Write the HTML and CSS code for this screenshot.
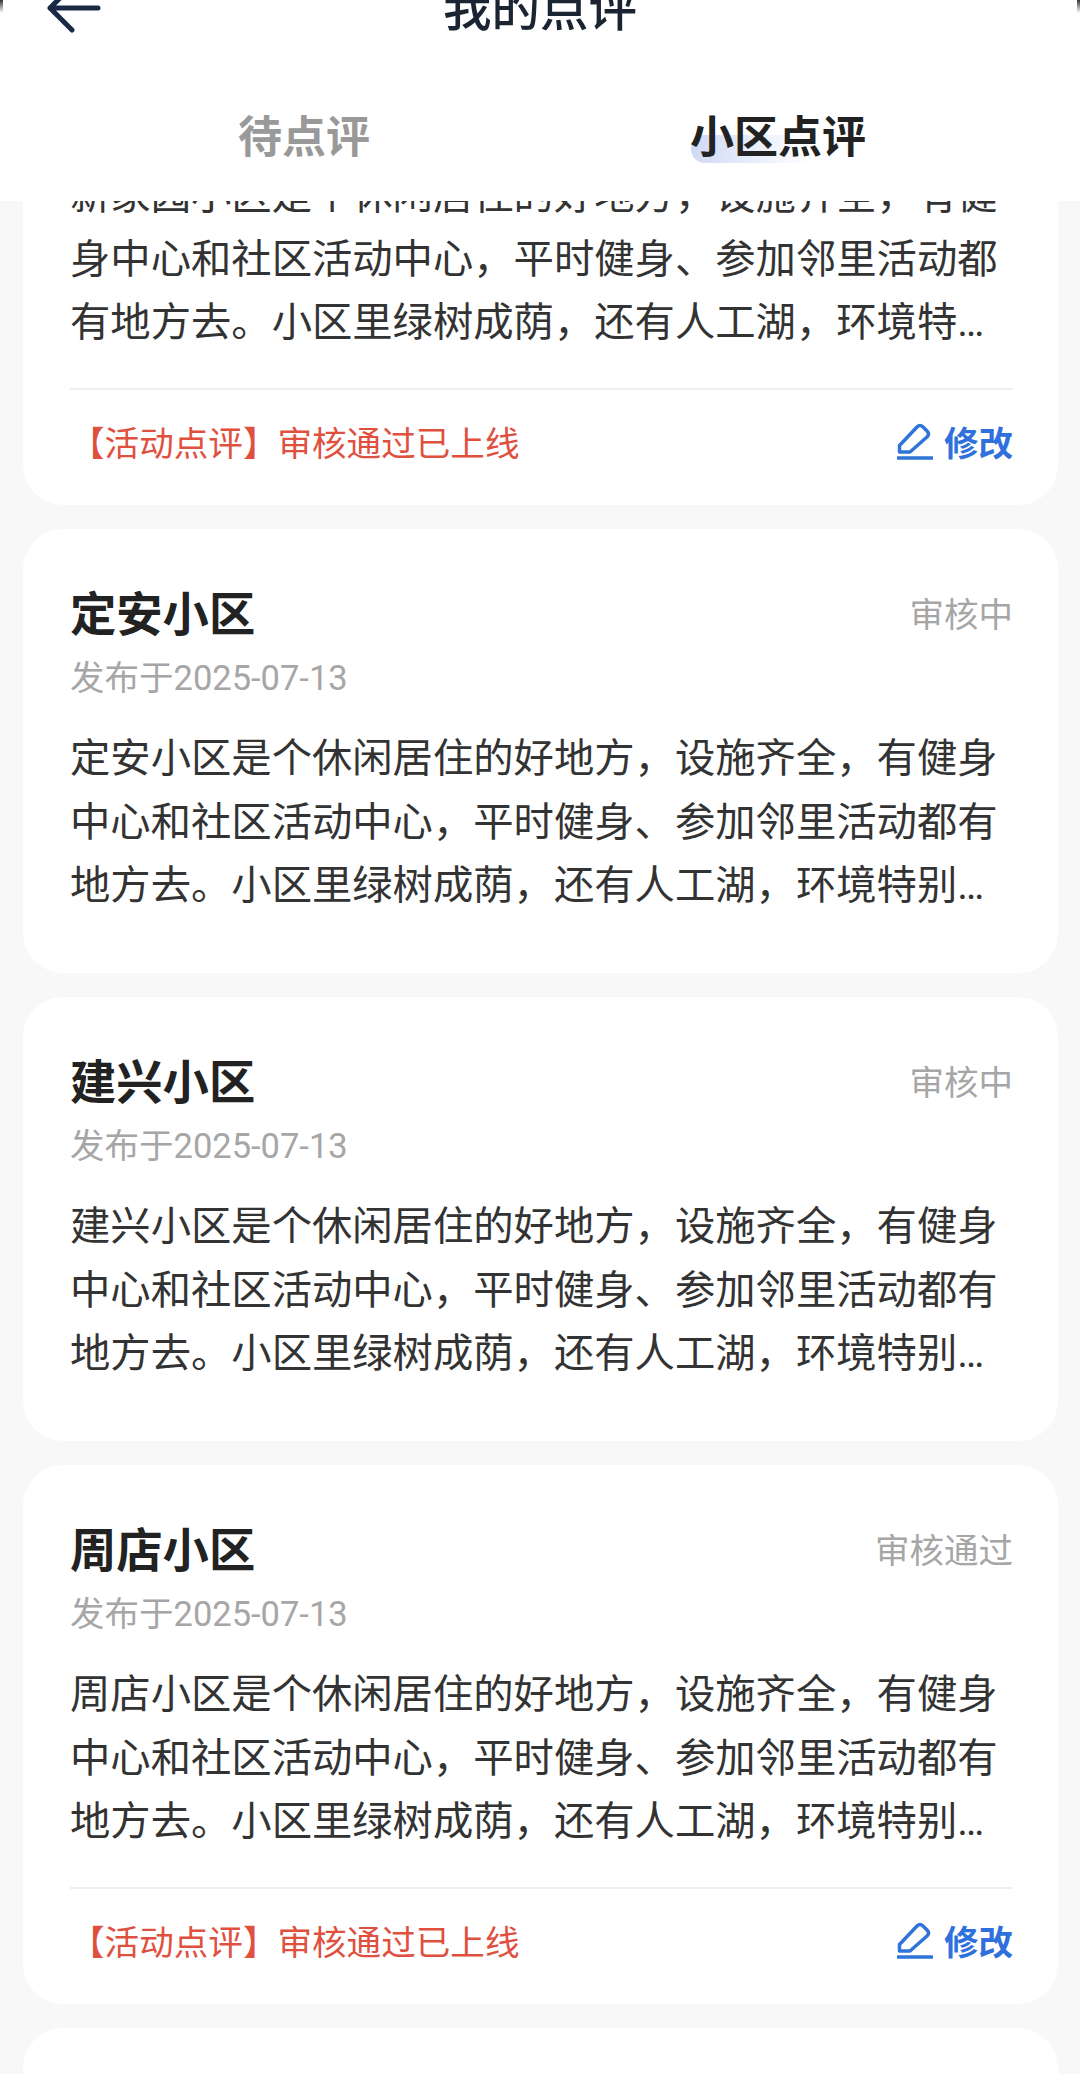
FILE: index.html
```html
<!DOCTYPE html>
<html lang="zh-CN">
<head>
<meta charset="utf-8">
<title>我的点评</title>
<link rel="stylesheet" href="styles.css">
</head>
<body>
<div class="page">
  <header class="header">
    <div class="nav">
      <svg class="nav-back" viewBox="0 0 60 50" aria-hidden="true"><path d="M54 22H6M28 0 6 22l22 22"/></svg>
      <h1 class="nav-title">我的点评</h1>
    </div>
    <div class="tabs">
      <div class="tab">待点评</div>
      <div class="tab tab-active"><span class="tab-mark"></span><span class="tab-label">小区点评</span></div>
    </div>
  </header>
  <main class="scroller">
    <div class="list">
      <article class="card card-footed">
        <div class="card-head"><h2 class="card-name">新家园小区</h2><span class="card-status">审核通过</span></div>
        <div class="card-date">发布于2025-07-13</div>
        <p class="card-text">新家园小区是个休闲居住的好地方，设施齐全，有健身中心和社区活动中心，平时健身、参加邻里活动都有地方去。小区里绿树成荫，还有人工湖，环境特别优美，住在这里非常舒适，非常适合居住。</p>
        <div class="card-foot">
          <span class="card-note">【活动点评】审核通过已上线</span>
          <span class="card-edit"><svg class="edit-icon" viewBox="0 0 36 38" aria-hidden="true"><path class="edit-pen" d="M2.500 30V23.500L20 5q3-3 6 0L30 9q3 3 0 6L13 30Z"/><path class="edit-line" d="M1 36H35"/></svg>修改</span>
        </div>
      </article>
      <article class="card">
        <div class="card-head"><h2 class="card-name">定安小区</h2><span class="card-status">审核中</span></div>
        <div class="card-date">发布于2025-07-13</div>
        <p class="card-text">定安小区是个休闲居住的好地方，设施齐全，有健身中心和社区活动中心，平时健身、参加邻里活动都有地方去。小区里绿树成荫，还有人工湖，环境特别优美，住在这里非常舒适，非常适合居住。</p>
      </article>
      <article class="card">
        <div class="card-head"><h2 class="card-name">建兴小区</h2><span class="card-status">审核中</span></div>
        <div class="card-date">发布于2025-07-13</div>
        <p class="card-text">建兴小区是个休闲居住的好地方，设施齐全，有健身中心和社区活动中心，平时健身、参加邻里活动都有地方去。小区里绿树成荫，还有人工湖，环境特别优美，住在这里非常舒适，非常适合居住。</p>
      </article>
      <article class="card card-footed">
        <div class="card-head"><h2 class="card-name">周店小区</h2><span class="card-status">审核通过</span></div>
        <div class="card-date">发布于2025-07-13</div>
        <p class="card-text">周店小区是个休闲居住的好地方，设施齐全，有健身中心和社区活动中心，平时健身、参加邻里活动都有地方去。小区里绿树成荫，还有人工湖，环境特别优美，住在这里非常舒适，非常适合居住。</p>
        <div class="card-foot">
          <span class="card-note">【活动点评】审核通过已上线</span>
          <span class="card-edit"><svg class="edit-icon" viewBox="0 0 36 38" aria-hidden="true"><path class="edit-pen" d="M2.500 30V23.500L20 5q3-3 6 0L30 9q3 3 0 6L13 30Z"/><path class="edit-line" d="M1 36H35"/></svg>修改</span>
        </div>
      </article>
      <article class="card card-empty"></article>
    </div>
  </main>
</div>
</body>
</html>
```
FILE: styles.css
```css
* { box-sizing: border-box; }
html, body { margin: 0; padding: 0; }
body {
  width: 1080px;
  height: 2074px;
  overflow: hidden;
  background: #f8f8f8;
  font-family: Roboto, "Noto Sans CJK SC", sans-serif;
}
.page { display: flex; flex-direction: column; height: 2074px; }

.header { flex: none; height: 201px; background: #fff; position: relative; z-index: 1; }
.header::before,
.header::after {
  content: "";
  position: absolute;
  top: 0;
  width: 3px;
  height: 13px;
  background: linear-gradient(180deg, #333, rgba(255, 255, 255, 0));
}
.header::before { left: 0; }
.header::after { right: 0; }
.nav {
  height: 72px;
  margin-top: -26px;
  position: relative;
  display: flex;
  align-items: center;
  justify-content: center;
}
.nav-back {
  position: absolute;
  left: 44px;
  top: 12px;
  width: 60px;
  height: 50px;
  fill: none;
  stroke: #1a2a44;
  stroke-width: 5;
  stroke-linecap: round;
  stroke-linejoin: round;
}
.nav-title { margin: 0; font-size: 48.500px; line-height: 72px; font-weight: 500; color: #1b2433; }
.tabs { display: flex; padding: 0 65px 0 67px; margin-top: 62px; }
.tab {
  flex: 1;
  height: 60px;
  line-height: 60px;
  text-align: center;
  font-size: 44px;
  font-weight: 700;
  color: #999;
  position: relative;
}
.tab-active { color: #222; }
.tab-label { position: relative; }
.tab-mark {
  position: absolute;
  left: 150px;
  top: 27px;
  width: 120px;
  height: 28px;
  border-radius: 16px 0 0 16px;
  background: linear-gradient(90deg, #d0daf5, rgba(225, 232, 250, 0));
}

.scroller { flex: 1; min-height: 0; overflow: hidden; }
.list { display: flex; flex-direction: column; gap: 24px; margin-top: -235px; padding: 0 22px 0 23px; }
.card { background: #fff; border-radius: 40px; padding: 56px 45px 55.500px 47px; }
.card-footed { padding-bottom: 8px; }
.card-empty { height: 300px; }
.card-head { display: flex; justify-content: space-between; align-items: flex-start; }
.card-name { margin: 0; font-size: 46.300px; line-height: 60px; font-weight: 700; color: #222; }
.card-status { font-size: 34.500px; line-height: 60px; color: #a6a6a6; }
.card-date { margin-top: 10px; font-size: 34.500px; line-height: 46px; color: #a6a6a6; }
.card-text {
  margin: 26px 0 0;
  font-size: 40.350px;
  line-height: 63.500px;
  color: #333;
  display: -webkit-box;
  -webkit-box-orient: vertical;
  -webkit-line-clamp: 3;
  overflow: hidden;
}
.card-foot {
  margin-top: 33.500px;
  height: 109px;
  padding-bottom: 6px;
  border-top: 2px solid #eee;
  display: flex;
  justify-content: space-between;
  align-items: center;
}
.card-note { font-size: 34.600px; color: #e0503f; }
.card-edit {
  display: flex;
  align-items: center;
  gap: 11px;
  font-size: 34.500px;
  font-weight: 700;
  color: #2f70dc;
}
.edit-icon { width: 36px; height: 38px; fill: none; stroke: #2f74d8; }
.edit-pen { stroke-width: 3.500; stroke-linejoin: round; }
.edit-line { stroke-width: 3.500; stroke-linecap: round; }
```
